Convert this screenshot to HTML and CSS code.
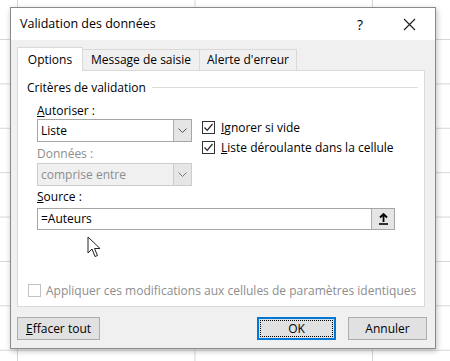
FILE: index.html
```html
<!DOCTYPE html>
<html lang="fr">
<head>
  <meta charset="UTF-8" />
  <meta name="viewport" content="width=device-width, initial-scale=1" />
  <title>Validation des données</title>
  <link rel="stylesheet" href="styles.css">
</head>
<body>

<div class="dialog">
  <div class="titlebar">
    <span class="title">Validation des données</span>
    <span class="help">?</span>
    <span class="close">
      <svg width="13" height="13" viewBox="0 0 13 13"><path d="M1 1L12 12M12 1L1 12" stroke="#222" stroke-width="1.2" fill="none"/></svg>
    </span>
  </div>

  <div class="dlg-body">
    <div class="tabs">
      <div class="tab tab-options active">Options</div>
      <div class="tab tab-message">Message de saisie</div>
      <div class="tab tab-alerte">Alerte d'erreur</div>
    </div>

    <div class="panel">
      <div class="group-title"><span>Critères de validation</span><i class="group-line"></i></div>

      <div class="criteria">
        <div class="col-left">
          <div class="lbl"><u>A</u>utoriser :</div>
          <div class="combo">
            <span class="val">Liste</span>
            <span class="drop"><svg width="9" height="5" viewBox="0 0 9 5"><path d="M0.5 0.5L4.5 4.5L8.5 0.5" stroke="#555" fill="none"/></svg></span>
          </div>
          <div class="lbl lbl-data disabled">Données :</div>
          <div class="combo disabled">
            <span class="val">comprise entre</span>
            <span class="drop"><svg width="9" height="5" viewBox="0 0 9 5"><path d="M0.5 0.5L4.5 4.5L8.5 0.5" stroke="#777" fill="none"/></svg></span>
          </div>
        </div>
        <div class="col-right">
          <div class="check">
            <span class="box"><svg width="11" height="11" viewBox="0 0 11 11"><path d="M1.5 5.5L4.2 8.3L9.5 2" stroke="#222" stroke-width="1.2" fill="none"/></svg></span>
            <span><u>I</u>gnorer si vide</span>
          </div>
          <div class="check">
            <span class="box"><svg width="11" height="11" viewBox="0 0 11 11"><path d="M1.5 5.5L4.2 8.3L9.5 2" stroke="#222" stroke-width="1.2" fill="none"/></svg></span>
            <span><u>L</u>iste déroulante dans la cellule</span>
          </div>
        </div>
      </div>

      <div class="lbl lbl-source"><u>S</u>ource :</div>
      <div class="source">
        <span class="val">=Auteurs</span>
        <span class="pick"><svg width="11" height="12" viewBox="0 0 11 12"><path d="M5.5 1V9M2 4.5L5.5 1L9 4.5" stroke="#000" stroke-width="1.8" fill="none"/><path d="M1 11H10" stroke="#000" stroke-width="1.6"/></svg></span>
      </div>

      <div class="check apply disabled">
        <span class="box"></span>
        <span>Appliquer ces modifications aux cellules de paramètres identiques</span>
      </div>
    </div>

    <div class="footer">
      <button class="btn"><u>E</u>ffacer tout</button>
      <span class="spacer"></span>
      <button class="btn ok"><span class="focus">OK</span></button>
      <button class="btn">Annuler</button>
    </div>
  </div>
</div>

<!-- pointeur de la souris -->
<svg class="cursor" width="16" height="22" viewBox="0 0 16 22">
  <path d="M1 1V17L5 13L8 20.5L10.5 19.5L7.5 12.5H13Z" fill="#fff" stroke="#222" stroke-width="1" stroke-linejoin="round"/>
</svg>

</body>
</html>
```

FILE: styles.css
```css
body {
  margin: 0;
  padding: 7px 0 0 10px;
  height: 361px;
  box-sizing: border-box;
  font-family: 'Segoe UI', 'Open Sans', sans-serif;
  font-size: 12px;
  color: #000;
  background-color: #fff;
  background-image:
    linear-gradient(to right, #d6d6d6 1px, transparent 1px),
    linear-gradient(to bottom, #d6d6d6 1px, transparent 1px);
  background-size: 177.5px 100%, 100% 44.4px;
  background-position: 17px 0, 0 39px;
  overflow: hidden;
  position: relative;
}
.dialog {
  width: 426px;
  border: 1px solid #8a8a8a;
  box-sizing: border-box;
  background: #f0f0f0;
  box-shadow: 1px 2px 6px rgba(0,0,0,0.25);
}
.titlebar {
  height: 32px;
  background: #fff;
  display: flex;
  align-items: center;
  padding-left: 9px;
}
.title {
  font-size: 12.5px;
  flex: 1;
  padding-bottom: 1px;
}
.help {
  font-size: 14px;
  width: 10px;
  margin-right: 28px;
}
.close {
  width: 40px;
  display: flex;
}
.close svg { margin-left: 8px; }
.dlg-body {
  padding: 8px 8px 8px 6px;
}
.tabs {
  display: flex;
  align-items: flex-end;
  height: 23px;
  position: relative;
  z-index: 1;
  margin-bottom: -1px;
}
.tab {
  height: 21px;
  box-sizing: border-box;
  border: 1px solid #d9d9d9;
  border-bottom: none;
  background: #f0f0f0;
  text-align: center;
  line-height: 20px;
  margin-left: -1px;
  margin-bottom: 1px;
}
.tab.active {
  height: 24px;
  background: #fff;
  margin-left: 0;
  margin-bottom: 0;
  line-height: 24px;
  position: relative;
  z-index: 2;
}
.tab-options { width: 66px; }
.tab-message { width: 118px; }
.tab-alerte { width: 98px; }
.panel {
  height: 237px;
  box-sizing: border-box;
  background: #fff;
  border: 1px solid #d9d9d9;
  margin-right: 2px;
  padding: 8px 6px 0 9px;
}
.group-title {
  display: flex;
  align-items: center;
  height: 16px;
}
.group-line {
  flex: 1;
  height: 1px;
  background: #dcdcdc;
  margin-left: 6px;
}
.criteria {
  display: flex;
  margin-top: 8px;
  padding-left: 10px;
}
.col-left {
  width: 155px;
}
.col-right {
  margin-left: 10px;
  padding-top: 16px;
}
.lbl {
  height: 16px;
  line-height: 16px;
}
.lbl-data {
  margin-top: 4px;
  margin-bottom: 1px;
}
.lbl-source {
  margin: 3px 0 3px 10px;
}
.disabled { color: #8d8d8d; }
.combo {
  display: flex;
  height: 23px;
  box-sizing: border-box;
  border: 1px solid #a6a6a6;
  background: #fff;
}
.combo .val {
  flex: 1;
  line-height: 21px;
  padding-left: 3px;
}
.drop {
  width: 17px;
  background: #e5e5e5;
  border-left: 1px solid #adadad;
  display: flex;
  align-items: center;
  justify-content: center;
}
.combo.disabled {
  background: #f0f0f0;
  border-color: #cccccc;
}
.combo.disabled .drop {
  border-left-color: #cccccc;
  background: #e6e6e6;
}
.check {
  display: flex;
  align-items: center;
  height: 16px;
  margin-bottom: 4px;
}
.box {
  width: 13px;
  height: 13px;
  box-sizing: border-box;
  border: 1px solid #333;
  background: #fff;
  margin-right: 6px;
  display: flex;
}
.source {
  display: flex;
  width: 358px;
  height: 22px;
  box-sizing: border-box;
  margin-left: 10px;
  border: 1px solid #a6a6a6;
}
.source .val {
  flex: 1;
  line-height: 20px;
  padding-left: 3px;
}
.pick {
  width: 22px;
  background: #e5e5e5;
  border-left: 1px solid #adadad;
  display: flex;
  align-items: center;
  justify-content: center;
}
.apply {
  margin-top: 52px;
  margin-left: 1px;
}
.apply .box {
  border-color: #c2c2c2;
  margin-right: 5px;
}
.footer {
  display: flex;
  margin-top: 10px;
}
.spacer { flex: 1; }
.btn {
  font-family: inherit;
  font-size: 12px;
  height: 23px;
  width: 79px;
  background: #e1e1e1;
  border: 1px solid #adadad;
  padding: 0;
  margin-left: 12px;
  color: #000;
}
.btn:first-child {
  width: 83px;
  margin-left: 0;
}
.ok {
  border: 1px solid #0078d7;
  box-shadow: inset 0 0 0 1px #0078d7;
  padding: 2px;
  display: flex;
}
.focus {
  flex: 1;
  border: 1px dotted #000;
  line-height: 15px;
}
.cursor {
  position: absolute;
  left: 87px;
  top: 236px;
}
```
